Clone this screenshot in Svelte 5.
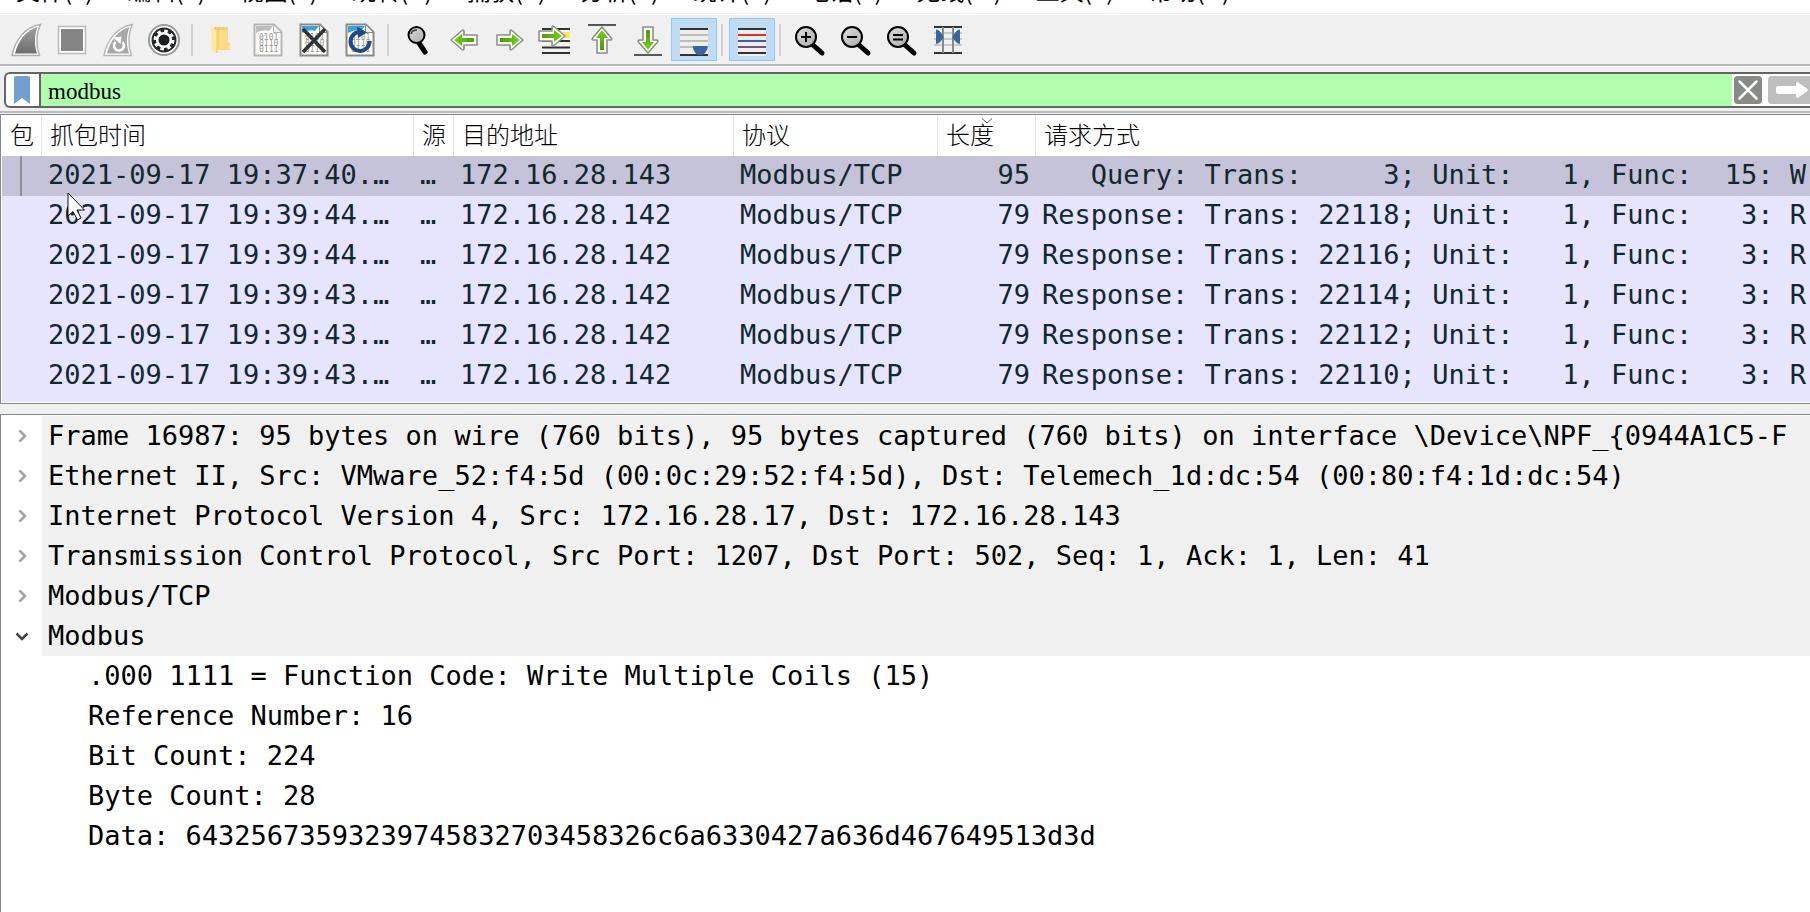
<script>
  const menus = ['文件(F)', '编辑(E)', '视图(V)', '跳转(G)', '捕获(C)', '分析(A)', '统计(S)', '电话(Y)', '无线(W)', '工具(T)', '帮助(H)'];

  const tools = [
    'start', 'stop', 'restart', 'options', '|',
    'open', 'save', 'close', 'reload', '|',
    'find', 'back', 'forward', 'goto', 'first', 'last', 'autoscroll', '|',
    'colorize', '|',
    'zoomin', 'zoomout', 'zoomreset', 'resize'
  ];
  const pressed = ['autoscroll', 'colorize'];

  const packets = [
    { time: '2021-09-17 19:37:40.…', dst: '172.16.28.143', len: 95, info: '   Query: Trans:     3; Unit:   1, Func:  15: W' },
    { time: '2021-09-17 19:39:44.…', dst: '172.16.28.142', len: 79, info: 'Response: Trans: 22118; Unit:   1, Func:   3: R' },
    { time: '2021-09-17 19:39:44.…', dst: '172.16.28.142', len: 79, info: 'Response: Trans: 22116; Unit:   1, Func:   3: R' },
    { time: '2021-09-17 19:39:43.…', dst: '172.16.28.142', len: 79, info: 'Response: Trans: 22114; Unit:   1, Func:   3: R' },
    { time: '2021-09-17 19:39:43.…', dst: '172.16.28.142', len: 79, info: 'Response: Trans: 22112; Unit:   1, Func:   3: R' },
    { time: '2021-09-17 19:39:43.…', dst: '172.16.28.142', len: 79, info: 'Response: Trans: 22110; Unit:   1, Func:   3: R' }
  ];

  const layers = [
    { text: 'Frame 16987: 95 bytes on wire (760 bits), 95 bytes captured (760 bits) on interface \\Device\\NPF_{0944A1C5-F' },
    { text: 'Ethernet II, Src: VMware_52:f4:5d (00:0c:29:52:f4:5d), Dst: Telemech_1d:dc:54 (00:80:f4:1d:dc:54)' },
    { text: 'Internet Protocol Version 4, Src: 172.16.28.17, Dst: 172.16.28.143' },
    { text: 'Transmission Control Protocol, Src Port: 1207, Dst Port: 502, Seq: 1, Ack: 1, Len: 41' },
    { text: 'Modbus/TCP' },
    {
      text: 'Modbus',
      fields: [
        '.000 1111 = Function Code: Write Multiple Coils (15)',
        'Reference Number: 16',
        'Bit Count: 224',
        'Byte Count: 28',
        'Data: 64325673593239745832703458326c6a6330427a636d467649513d3d'
      ]
    }
  ];

  let filter = $state('modbus');
  let selected = $state(0);
  let open = $state([false, false, false, false, false, true]);
</script>

{#snippet sheet(edge, top)}
  <path d="M9.5 6.5H29L36.5 14V37.500H9.500Z" fill="#fdfdf8" stroke={edge} stroke-width="2" />
  <path d="M11 8H28L24 13Q18 11 11 15Z" fill={top} />
  <path d="M28.500 7V14.500H36" fill="#eee" stroke={edge} stroke-width="1" />
  <g class="bits" fill="#999">
    <text x="14" y="22">0101</text>
    <text x="14" y="28">0110</text>
    <text x="14" y="34">0111</text>
  </g>
{/snippet}

{#snippet glass(sign)}
  <path d="M26 27L35 35" stroke="#000" stroke-width="5" stroke-linecap="round" />
  <circle cx="19" cy="19" r="10" fill="url(#lens)" stroke="#000" stroke-width="2" />
  <path d={sign} stroke="#000" stroke-width="2" fill="none" />
{/snippet}

{#snippet arrow(turn)}
  <g transform={turn}>
    <path d="M10 17H23V13.500Q23 11 25.500 13L36 22L25.500 31Q23 33 23 30.500V27H10Z" fill="#fff" stroke="#8c8e89" stroke-width="1.600" stroke-linejoin="round" />
    <path d="M13 20H25V16L33 22L25 28V24H13Z" fill="url(#leaf)" />
  </g>
{/snippet}

{#snippet icon(name)}
  <svg viewBox="0 0 46 43" aria-hidden="true">
    {#if name === 'start'}
      <path d="M9 37.500C12 22 22 9 37.500 6.500C33 16 33 28 36.500 37.500Z" fill="#fff" stroke="#b0b0b0" stroke-width="1.500" />
      <path d="M12 35.500C15 23 23 12 34.500 9C31 18 31.500 28 34 35.500Z" fill="url(#steel)" />
    {:else if name === 'stop'}
      <rect x="9.500" y="8.500" width="27" height="27" fill="#fff" stroke="#b8b8b8" stroke-width="1.500" />
      <rect x="12" y="11" width="22" height="22" fill="#858585" />
    {:else if name === 'restart'}
      <path d="M9 37.500C12 22 22 9 37.500 6.500C33 16 33 28 36.500 37.500Z" fill="#fff" stroke="#b8b8b8" stroke-width="1.500" />
      <path d="M12 35.500C15 23 23 12 34.500 9C31 18 31.500 28 34 35.500Z" fill="#a8a8a8" />
      <path d="M20.500 24A5 5 0 1 0 27.500 24" fill="none" stroke="#fff" stroke-width="2.500" />
      <path d="M18 19.500L26.500 18.500L25.500 26Z" fill="#fff" />
    {:else if name === 'options'}
      <circle cx="23" cy="22" r="15" fill="#fff" stroke="#999" stroke-width="2" />
      <circle cx="23" cy="22" r="12.500" fill="#252829" />
      <circle cx="23" cy="22" r="9" fill="none" stroke="#fff" stroke-width="3" stroke-dasharray="3.530 3.530" />
      <circle cx="23" cy="22" r="6.800" fill="#1b1e1f" stroke="#fff" stroke-width="2.500" />
    {:else if name === 'open'}
      <path d="M15 9H29V25H31V32H15Z" fill="#f2cf6e" />
      <path d="M20 12H29V25H31V32H20Z" fill="#fbdc85" />
      <path d="M12 9.500L18.500 13V35.500L12.500 32.500Z" fill="#ffe9a3" />
      <path d="M18 13V35" stroke="#eec75f" stroke-width="1" />
    {:else if name === 'save'}
      {@render sheet('#b5b5b5', '#bdbdbd')}
    {:else if name === 'close'}
      {@render sheet('#898b84', '#34a6dc')}
      <path d="M12 11L34 34M34 11L12 34" stroke="#2e3436" stroke-width="3.500" />
    {:else if name === 'reload'}
      {@render sheet('#898b84', '#34a6dc')}
      <path d="M22 14A9.500 9.500 0 1 0 32.500 23" fill="none" stroke="#204a87" stroke-width="4" />
      <path d="M20 8.500L30 14.500L21 20Z" fill="#204a87" />
    {:else if name === 'find'}
      <path d="M24 25L30 34" stroke="#000" stroke-width="5" stroke-linecap="round" />
      <circle cx="21.500" cy="17" r="8" fill="url(#lens)" stroke="#000" stroke-width="2" />
      <path d="M16 16Q17 12 22 12" fill="none" stroke="#333" stroke-width="1.500" />
    {:else if name === 'back'}
      {@render arrow('rotate(180 23 22)')}
    {:else if name === 'forward'}
      {@render arrow('')}
    {:else if name === 'goto'}
      <rect x="9" y="10" width="28" height="26" fill="#f4f4f1" />
      <path d="M9 11H37M9 23H37M9 29.500H37M9 35H37" stroke="#2e3436" stroke-width="2" />
      <path d="M28 14H37V20H28Z" fill="#fce94f" />
      {@render arrow('translate(-4 -4)')}
    {:else if name === 'first'}
      <path d="M9 7H37" stroke="#555753" stroke-width="2" />
      {@render arrow('rotate(-90 23 22)')}
    {:else if name === 'last'}
      <path d="M9 37H37" stroke="#555753" stroke-width="2" />
      {@render arrow('rotate(90 23 22)')}
    {:else if name === 'autoscroll'}
      <rect x="9" y="10" width="28" height="28" fill="#eeeeec" />
      <path d="M9 17H37M9 23H37M9 29H37" stroke="#babdb6" stroke-width="2" />
      <path d="M9 11H37M9 37H37" stroke="#2e3436" stroke-width="2" />
      <path d="M22 28H36.500Q37.500 32 32 37H26.500Q21 32 22 28Z" fill="#3465a4" />
    {:else if name === 'colorize'}
      <rect x="9" y="10" width="28" height="28" fill="#eeeeec" />
      <path d="M9 11H37M9 35H37" stroke="#2e3436" stroke-width="2" />
      <path d="M9 17H37" stroke="#ef2929" stroke-width="2" />
      <path d="M9 23H37" stroke="#3465a4" stroke-width="2" />
      <path d="M9 29H37" stroke="#75507b" stroke-width="2" />
    {:else if name === 'zoomin'}
      {@render glass('M14 19H24M19 14V24')}
    {:else if name === 'zoomout'}
      {@render glass('M14 19H24')}
    {:else if name === 'zoomreset'}
      {@render glass('M14 17H24M14 21.500H24')}
    {:else}
      <path d="M9 15H37M9 21H37M9 27H37" stroke="#c9cbc6" stroke-width="2" />
      <path d="M9 9H37M9 35H37" stroke="#2e3436" stroke-width="2" />
      <path d="M18 9V35M28 9V35" stroke="#888a85" stroke-width="2" />
      <path d="M11 11.500Q15 11.500 18.500 19Q15 26 11 26ZM35 11.500Q31 11.500 27.500 19Q31 26 35 26Z" fill="#3465a4" />
    {/if}
  </svg>
{/snippet}

<div class="window">
  <svg class="defs" aria-hidden="true">
    <linearGradient id="leaf" x1="0" x2="1"><stop offset="0" stop-color="#4e9a06" /><stop offset="1" stop-color="#73d216" /></linearGradient>
    <linearGradient id="steel" x1="0" y1="0" x2="0" y2="1"><stop offset="0" stop-color="#a0a0a0" /><stop offset="1" stop-color="#6e6e6e" /></linearGradient>
    <linearGradient id="lens" x1="0" y1="0" x2="1" y2="1"><stop offset="0" stop-color="#dedede" /><stop offset="1" stop-color="#aaa" /></linearGradient>
  </svg>

  <nav class="menu">
    {#each menus as label}<button>{label}</button>{/each}
  </nav>

  <div class="toolbar">
    {#each tools as tool}
      {#if tool === '|'}
        <span class="sep"></span>
      {:else}
        <button class="tool" class:pressed={pressed.includes(tool)} aria-label={tool}>{@render icon(tool)}</button>
      {/if}
    {/each}
  </div>

  <div class="filterbar">
    <div class="filter">
      <button class="bookmark" aria-label="bookmark">
        <svg viewBox="0 0 16 28"><path d="M0 2Q0 0 2 0H14Q16 0 16 2V28L8 22L0 28Z" fill="#729fcf" /></svg>
      </button>
      <input aria-label="display filter" bind:value={filter} spellcheck="false" />
      <button class="clear" aria-label="clear" onclick={() => (filter = '')}>
        <svg viewBox="0 0 28 28"><path d="M5.500 5.500L22.500 22.500M22.500 5.500L5.500 22.500" stroke="#fff" stroke-width="2.500" stroke-linecap="round" /></svg>
      </button>
      <button class="apply" aria-label="apply">
        <svg viewBox="0 0 42 28"><path d="M10 10H28V7Q29 5 31 7L39 12.500Q40.500 14 39 15.500L31 21Q29 23 28 21V18H10Q8 18 8 16V12Q8 10 10 10Z" fill="#fff" /></svg>
      </button>
    </div>
  </div>

  <section class="packets">
    <table>
      <colgroup>
        <col class="c-no" /><col class="c-time" /><col class="c-no" /><col class="c-dst" /><col class="c-proto" /><col class="c-len" /><col />
      </colgroup>
      <thead>
        <tr>
          <th>包</th><th>抓包时间</th><th>源</th><th>目的地址</th><th>协议</th>
          <th class="sorted">长度<svg viewBox="0 0 12 6" aria-hidden="true"><path d="M1 0.500L6 5L11 0.500" fill="none" stroke="#555" /></svg></th>
          <th>请求方式</th>
        </tr>
      </thead>
      <tbody>
        {#each packets as p, i}
          <tr class:selected={i === selected} onclick={() => (selected = i)}>
            <td>{#if i === 0}<span class="conversation"></span>{/if}</td>
            <td>{p.time}</td>
            <td>…</td>
            <td>{p.dst}</td>
            <td>Modbus/TCP</td>
            <td class="num">{p.len}</td>
            <td>{p.info}</td>
          </tr>
        {/each}
      </tbody>
    </table>
    <svg class="pointer" viewBox="0 0 19 30" aria-hidden="true">
      <path d="M1 1V24L6 19.500L10.500 28L14 26L10 18H17.500Z" fill="#fff" stroke="#111" stroke-width="1" />
    </svg>
  </section>

  <section class="details">
    <ul>
      {#each layers as layer, i}
        <li>
          <div class="layer">
            <button class="expander" class:open={open[i]} aria-label={layer.text} aria-expanded={open[i]} onclick={() => (open[i] = !open[i])}>
              <svg viewBox="0 0 14 14"><path d="M4.500 1.500L10 7L4.500 12.500" fill="none" stroke="currentColor" stroke-width="2.500" /></svg>
            </button>
            <span class="text">{layer.text}</span>
          </div>
          {#if open[i] && layer.fields}
            <ul class="fields">
              {#each layer.fields as field}<li>{field}</li>{/each}
            </ul>
          {/if}
        </li>
      {/each}
    </ul>
  </section>
</div>

<style>
  :global(body) { margin: 0; background: #f0f0f0; }
  * { box-sizing: border-box; }
  button { border: 0; padding: 0; margin: 0; background: none; font: inherit; color: inherit; }
  svg { display: block; }
  .defs { position: absolute; width: 0; height: 0; }

  .window {
    display: flex;
    flex-direction: column;
    min-height: 100vh;
    overflow: hidden;
    color: #000;
    font-family: "DejaVu Sans Mono", "Noto Sans CJK SC", monospace;
    font-size: 27px;
  }

  .menu {
    display: flex;
    align-items: flex-end;
    gap: 34px;
    height: 14px;
    padding: 0 16px;
    overflow: hidden;
    background: #fff;
    border-bottom: 1px solid #f0f0f0;
    font: 24px/46px "Noto Sans CJK SC", sans-serif;
  }
  .menu button { flex: none; }

  .toolbar {
    display: flex;
    align-items: center;
    height: 52px;
    padding: 3px;
    background: #f0f0f0;
    border-top: 1px solid #fff;
    border-bottom: 2px solid #b9b9b9;
  }
  .tool { flex: none; width: 46px; height: 43px; }
  .tool.pressed { background: #c0dcf3; box-shadow: inset 0 0 0 1px #90c8f6; }
  .sep { flex: none; width: 2px; height: 32px; margin: 0 6px 0 4px; background: #d2d2d2; }
  .bits { font: 8px "DejaVu Sans Mono", monospace; }

  .filterbar {
    margin-bottom: 1px;
    padding: 5px 0 3px 4px;
    border-top: 1px solid #fff;
    border-bottom: 2px solid #b9b9b9;
  }
  .filter {
    display: flex;
    align-items: center;
    height: 36px;
    background: #fff;
    border: 2px solid #646464;
    border-right: 0;
    border-radius: 6px 0 0 6px;
  }
  .bookmark { display: flex; align-items: center; width: 35px; height: 32px; padding-left: 8px; border-right: 2px solid #646464; }
  .bookmark svg { width: 16px; height: 28px; }
  .filter input {
    flex: 1;
    min-width: 0;
    height: 32px;
    padding: 4px 7px 0;
    border: 0;
    outline: 0;
    background: #afffaf;
    color: #000;
    font: 23px "Liberation Serif", serif;
  }
  .clear { width: 28px; height: 28px; margin: 0 6px 0 2px; border-radius: 4px; background: #888a85; }
  .apply { width: 42px; height: 28px; border-radius: 4px 0 0 4px; background: #bebebe; }

  .packets {
    position: relative;
    padding: 0 0 1px 1px;
    border: 1px solid #828790;
    border-right: 0;
    background: #fff;
  }
  table { width: 100%; table-layout: fixed; border-spacing: 0; border-bottom: 6px solid #e5e5ff; }
  .c-no { width: 40px; }
  .c-time { width: 372px; }
  .c-dst { width: 280px; }
  .c-proto { width: 204px; }
  .c-len { width: 98px; }
  th {
    position: relative;
    height: 41px;
    padding: 0 0 0 8px;
    vertical-align: top;
    font: 24px/38px "Noto Sans CJK SC", sans-serif;
    font-weight: 300;
    text-align: left;
    white-space: nowrap;
    background: linear-gradient(#e5e5e5, #e5e5e5) right / 1px 100% no-repeat;
  }
  th:last-child { background: none; }
  .sorted svg { position: absolute; top: 3px; left: 43px; width: 12px; height: 6px; }
  td {
    height: 40px;
    padding: 0 6px;
    vertical-align: top;
    line-height: 38px;
    color: #12272e;
    white-space: pre;
    overflow: hidden;
  }
  td:last-child { padding-right: 0; }
  tbody { background: #e5e5ff; }
  tbody tr.selected { background: #c5c3d9; }
  .num { text-align: right; }
  .conversation { display: block; width: 2px; height: 40px; margin-left: 12px; background: #869197; }
  .pointer { position: absolute; top: 77px; left: 66px; width: 19px; height: 30px; }

  .details {
    flex: 1;
    margin-top: 10px;
    padding-top: 1px;
    border: 1px solid #828790;
    border-width: 1px 0 0 1px;
    background: #fff;
    overflow: hidden;
  }
  ul { margin: 0; padding: 0; list-style: none; line-height: 40px; }
  .layer { display: flex; }
  .expander { display: flex; flex: none; justify-content: center; align-items: center; width: 41px; height: 40px; color: #a0a0a0; }
  .expander svg { width: 14px; height: 14px; }
  .expander.open { color: #444; }
  .expander.open svg { transform: rotate(90deg); }
  .text { flex: 1; padding-left: 6px; background: #f0f0f0; white-space: pre; overflow: hidden; }
  .fields { padding-left: 87px; white-space: nowrap; }
</style>
